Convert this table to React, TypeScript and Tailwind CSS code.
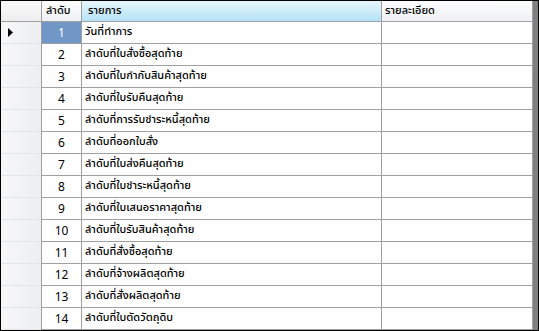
import React from "react";

const items = [
  "วันที่ทำการ",
  "ลำดับที่ใบสั่งซื้อสุดท้าย",
  "ลำดับที่ใบกำกับสินค้าสุดท้าย",
  "ลำดับที่ใบรับคืนสุดท้าย",
  "ลำดับที่การรับชำระหนี้สุดท้าย",
  "ลำดับที่ออกใบสั่ง",
  "ลำดับที่ใบส่งคืนสุดท้าย",
  "ลำดับที่ใบชำระหนี้สุดท้าย",
  "ลำดับที่ใบเสนอราคาสุดท้าย",
  "ลำดับที่ใบรับสินค้าสุดท้าย",
  "ลำดับที่สั่งซื้อสุดท้าย",
  "ลำดับที่จ้างผลิตสุดท้าย",
  "ลำดับที่สั่งผลิตสุดท้าย",
  "ลำดับที่ใบตัดวัตถุดิบ",
];

export default function App() {
  return (
    <div
      className="w-[539px] h-[331px] border border-black bg-[#808080] overflow-hidden text-[11px] text-black font-medium"
      style={{ fontFamily: '"Tahoma", "Noto Sans Thai", "Noto Sans", "Liberation Sans", sans-serif' }}
    >
      <div className="w-[532px] flex flex-col">
        <div className="flex h-[21px]">
          <div className="w-[41px] h-full border-r border-b border-[#a0a0a0] bg-gradient-to-b from-[#fafafa] to-[#eeeeee]" />
          <div className="w-[40px] h-full border-r border-b border-[#a0a0a0] bg-gradient-to-b from-[#fdfdfd] to-[#eef0f3] flex items-center pl-[4px]">
            ลำดับ
          </div>
          <div className="w-[300px] h-full border-r border-b border-[#a0a0a0] bg-gradient-to-b from-[#e8f6fd] to-[#b3e2f6] flex items-center pl-[6px]">
            รายการ
          </div>
          <div className="w-[151px] h-full border-r border-b border-[#a0a0a0] bg-gradient-to-b from-[#fdfdfd] to-[#eef0f3] flex items-center pl-[3px]">
            รายละเอียด
          </div>
        </div>
        {items.map((t, i) => (
          <div key={i} className="flex h-[22px] bg-white">
            <div className="w-[41px] h-full border-r border-[#a0a0a0] flex">
              <div className="flex-1 h-full border-b border-[#e4e6ea] bg-gradient-to-r from-[#f7f7f7] to-[#eceef2] flex items-center pl-[7px]">
                {i === 0 && (
                  <svg width="5" height="9" viewBox="0 0 5 9">
                    <path d="M0 0 L5 4.5 L0 9 Z" fill="#000" />
                  </svg>
                )}
              </div>
            </div>
            <div
              className={
                i === 0
                  ? "w-[40px] h-full border-r border-b border-[#a0a0a0] bg-[#7197c6] text-white flex items-center justify-center text-[12px] font-normal"
                  : "w-[40px] h-full border-r border-b border-[#a0a0a0] flex items-center justify-center text-[12px] font-normal"
              }
            >
              {i + 1}
            </div>
            <div className="w-[300px] h-full border-r border-b border-[#a0a0a0] flex items-center pl-[3px]">
              {t}
            </div>
            <div className="w-[151px] h-full border-r border-b border-[#a0a0a0]" />
          </div>
        ))}
      </div>
    </div>
  );
}
